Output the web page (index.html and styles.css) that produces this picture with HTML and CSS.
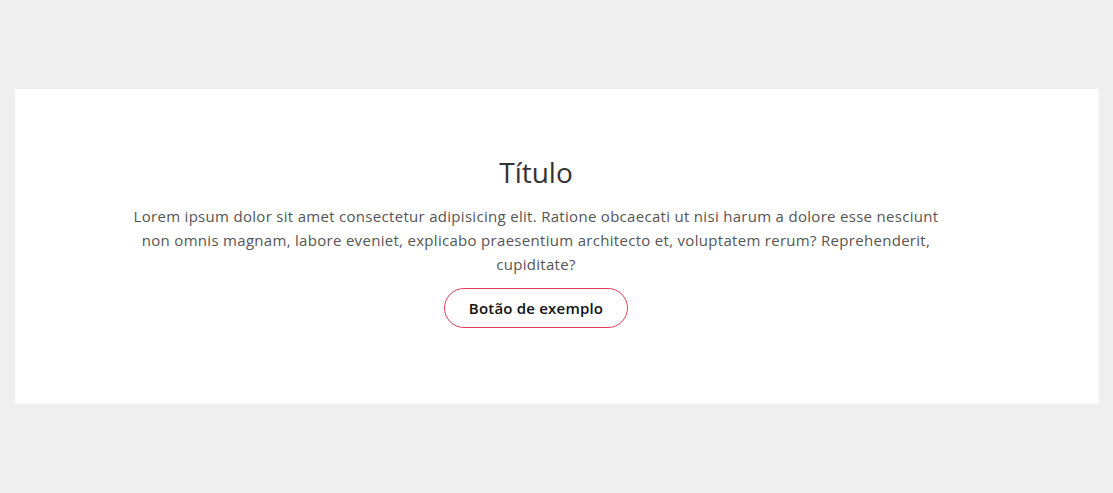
FILE: index.html
```html
<!DOCTYPE html>
<html lang="pt-BR">

<head>
    <meta charset="UTF-8">
    <meta name="viewport" content="width=device-width, initial-scale=1.0">
    <title>Título</title>
    <link rel="stylesheet" href="styles.css">
</head>

<body>
    <section class="card">
        <div class="card-content">
            <h2>Título</h2>
            <p>Lorem ipsum dolor sit amet consectetur adipisicing elit. Ratione obcaecati ut nisi harum a dolore esse nesciunt non omnis magnam, labore eveniet, explicabo praesentium architecto et, voluptatem rerum? Reprehenderit, cupiditate?</p>
            <a href="#" class="btn">Botão de exemplo</a>
        </div>
    </section>
</body>

</html>
```

FILE: styles.css
```css
body {
    margin: 0;
    padding: 89px 14px 0 15px;
    font-family: "Open Sans", sans-serif;
    background-color: #efefef;
    color: #444;
}

.card {
    background: #fff;
    height: 315px;
    display: flex;
    justify-content: center;
    padding-right: 42px;
}

.card-content {
    display: flex;
    flex-direction: column;
    align-items: center;
    text-align: center;
    max-width: 815px;
    padding-top: 64px;
}

.card-content h2 {
    margin: 0 0 13px;
    font-size: 28px;
    font-weight: 400;
    color: #333;
}

.card-content p {
    margin: 0 0 12px;
    font-size: 15px;
    line-height: 24px;
    letter-spacing: 0.3px;
    color: #555;
}

.btn {
    display: inline-block;
    padding: 9px 24px;
    border: 1px solid #e0405a;
    border-radius: 20px;
    color: #111;
    font-size: 15px;
    font-weight: 600;
    letter-spacing: 0.2px;
    text-decoration: none;
}
```
